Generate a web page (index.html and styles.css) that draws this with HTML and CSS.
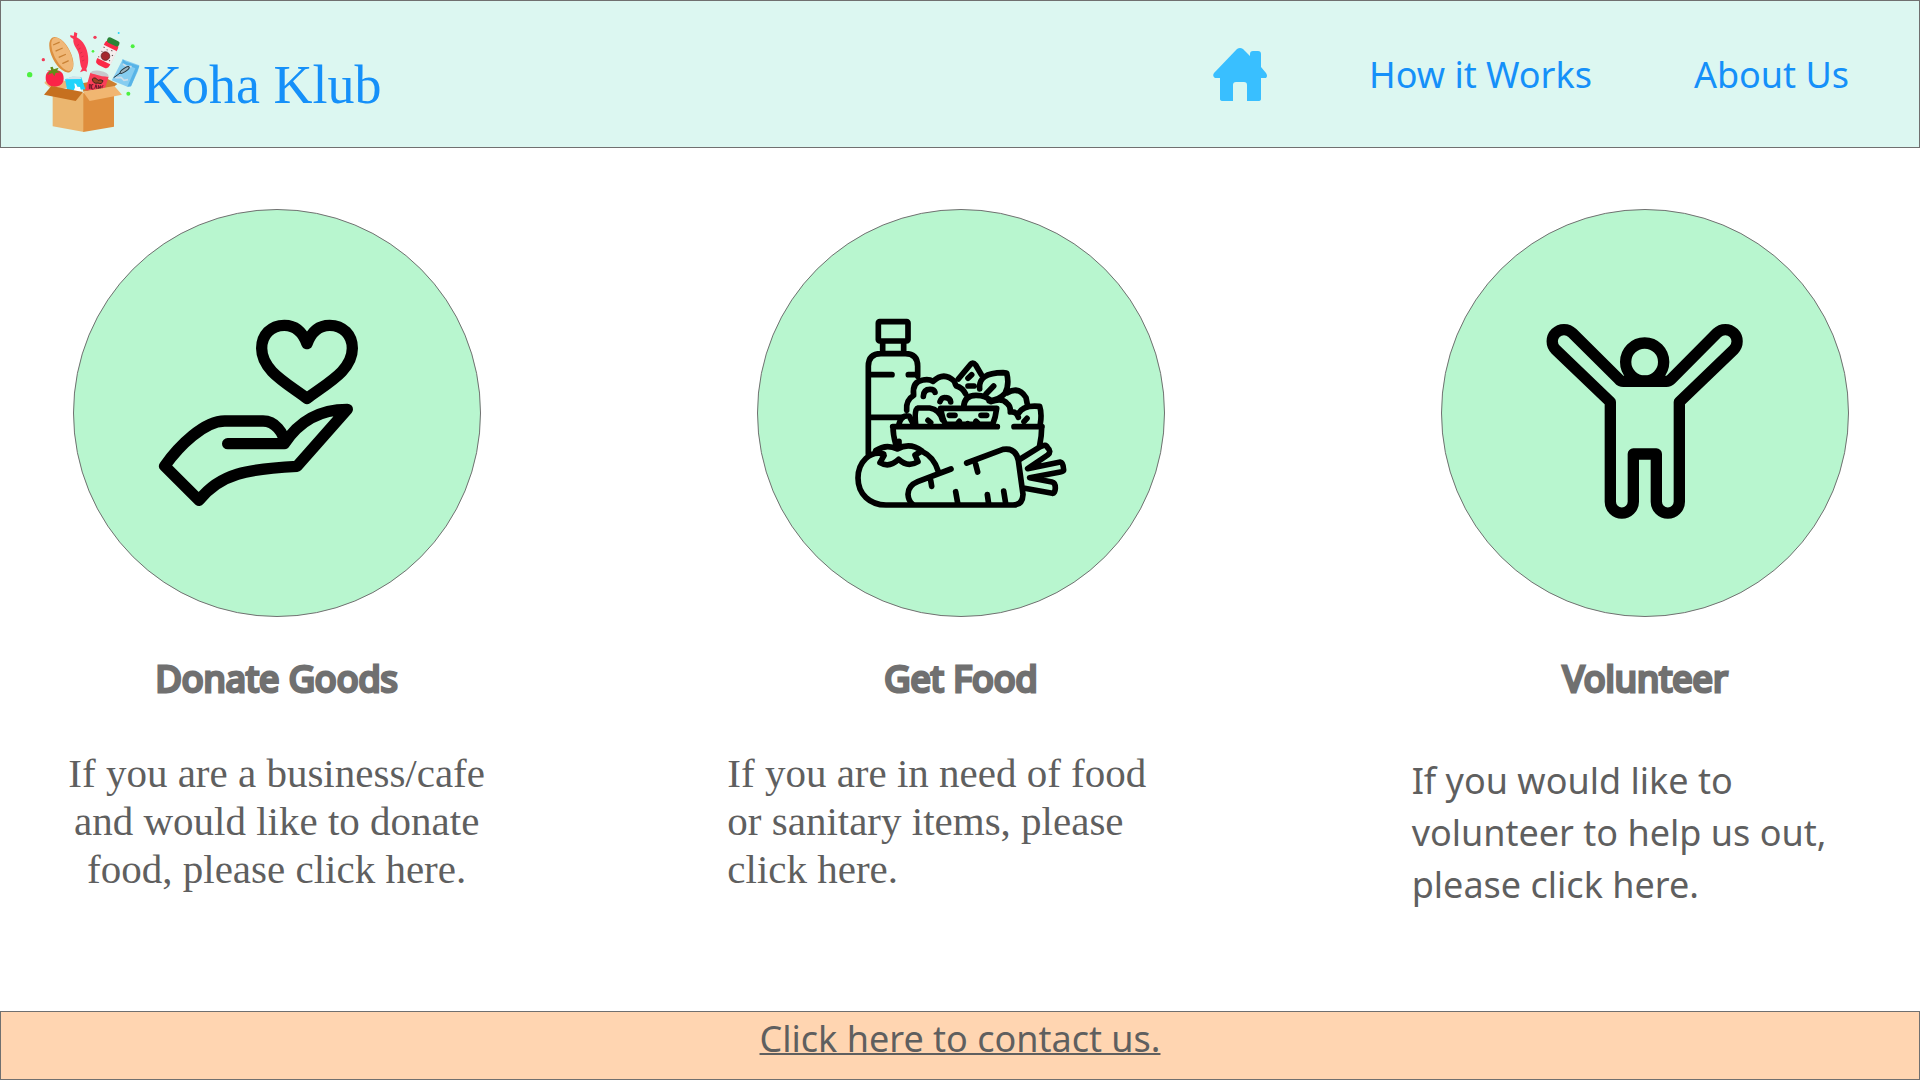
FILE: index.html
```html
<!DOCTYPE html>
<html lang="en">
<head>
<meta charset="utf-8">
<meta name="viewport" content="width=device-width, initial-scale=1">
<title>Koha Klub</title>
<link rel="stylesheet" href="styles.css">
</head>
<body>
<header class="site-header">
  <a class="brand" href="#">
    <svg class="brand-mark" viewBox="3 0 366 360" aria-hidden="true">
      <!-- confetti -->
      <g fill="#4cf03f"><circle cx="29" cy="164" r="8"/><circle cx="338" cy="79" r="6"/><circle cx="325" cy="221" r="6"/><circle cx="219" cy="94" r="4"/></g>
      <g fill="#f23b58"><circle cx="70" cy="119" r="5"/><circle cx="225" cy="52" r="5"/></g>
      <circle cx="296" cy="39" r="3" fill="#23d5fb"/>
      <!-- box interior -->
      <path d="M74 185L98 178L190 190L192 195L98 210L74 190Z" fill="#edb878"/>
      <path d="M186 190L262 176L292 192L282 200L190 215Z" fill="#cc7f30"/>
      <!-- bread -->
      <g transform="rotate(-27 124 104)"><ellipse cx="124" cy="104" rx="28" ry="58" fill="#dc9040"/><ellipse cx="127" cy="104" rx="24" ry="55" fill="#f0b878"/><path d="M117 67l18 1M115 87l20 1M115 108l20 1M116 129l18 1" stroke="#c98235" stroke-width="4" stroke-linecap="round"/></g>
      <!-- sausage -->
      <path d="M151 45L161 48L163 36L172 40L170 52C190 62 202 85 204 108C206 124 203 139 199 146L201 155L192 152L180 157L186 146C180 136 180 120 177 104C173 85 158 77 160 57L151 51Z" fill="#fb3655"/>
      <path d="M177 73l-6 4M182 84l-7 4M187 96l-7 4M191 108l-7 3M193 120l-7 3" stroke="#ca2944" stroke-width="2"/>
      <!-- jar -->
      <g transform="rotate(26 262 101)"><rect x="241" y="63" width="43" height="80" rx="12" fill="#fb2948"/><rect x="239" y="82" width="46" height="44" fill="#f4eeee"/><circle cx="260" cy="110" r="13" fill="#a5282e" stroke="#5c2023" stroke-width="2"/><path d="M243 88h4m8 3h3m10-4h4m4 12h4m-37 3h3m29 15h4m-38 4h4" stroke="#59494a" stroke-width="3"/><rect x="243" y="53" width="39" height="17" rx="7" fill="#2a8436"/></g>
      <!-- frozen bag -->
      <path d="M308 118L358 136L354 153L333 199L322 200L275 181L287 159Z" fill="#86cdf0"/>
      <path d="M308 118L318 125L358 138L333 199L322 200L346 145L307 130Z" fill="#58b4e7"/>
      <path d="M286 173l17-1 9 9 12-2M309 132l11 7 15 1" stroke="#cbdde9" stroke-width="5" fill="none"/>
      <path d="M281 173L302 158" stroke="#24343c" stroke-width="3"/><ellipse cx="314" cy="150" rx="16" ry="5" transform="rotate(-34 314 150)" fill="#9ab3be" stroke="#24343c" stroke-width="3"/>
      <!-- tomato -->
      <path d="M77 174C77 153 91 149 103 150C123 149 131 160 131 175C131 192 119 200 104 200C88 200 77 190 77 174Z" fill="#fb2448"/>
      <path d="M79 150l15 2-3-10 7-2 3 8 15-5-5 9 10 5-14 2-4 10-6-10-15 6 8-11z" fill="#638d18"/>
      <!-- milk carton and beans can -->
      <path d="M135 178L158 170L184 172L196 208L142 212Z" fill="#20d3fb"/><path d="M135 178L158 169L181 170L184 177Z" fill="#d3e4e8"/><path d="M163 190l5 2 4 8 8 1 4 14h-24l5-13z" fill="#fff"/>
      <path d="M211 158L266 170L253 210L196 211Z" fill="#fa3e58"/><path d="M211 159Q215 150 239 152Q266 157 266 169Q250 171 235 166Z" fill="#c8c8cd"/>
      <path d="M217 177q8-8 17 4q8-4 15 1q-3 13-15 7q-15 4-17-12z" fill="#9d4323" stroke="#40241c" stroke-width="3"/>
      <path d="M208 193v13m0-13q8 1 4 6q7 5-4 6m12-11h-5v13h6m3-1l4-12 3 13m4 0v-11l6 12v-12m9 1q-7 1-4 6q4 5-3 6" stroke="#681a2a" stroke-width="3" fill="none"/>
      <!-- box -->
      <path d="M98 205L192 220V336L98 319Z" fill="#ebb66f"/><path d="M190 220L282 204V320L190 336Z" fill="#df8e3d"/>
      <path d="M94 198L189 216L167 243L72 224Z" fill="#c6701f"/><path d="M189 215L283 198L306 224L209 243Z" fill="#f1b671"/>
    </svg>
    <span class="brand-name">Koha Klub</span>
  </a>
  <nav class="site-nav" aria-label="Main">
    <a href="#" aria-label="Home">
      <svg class="home-icon" viewBox="0 -1 54 54" aria-hidden="true"><path d="M24 1Q27-1 30 1L37 8V6Q37 3 40 3H45Q48 3 48 6V19L53 25Q55 28 53 30H48V51Q48 53 45 53H34V37Q34 34 31 34H23Q20 34 20 37V53H10Q7 53 7 51V30H2Q-1 28 1 25Z" fill="#39bfff"/></svg>
    </a>
    <a href="#how">How it Works</a>
    <a href="#about">About Us</a>
  </nav>
</header>
<main class="options">
  <section class="option">
    <a class="disc" href="#donate" aria-label="Donate Goods">
      <svg class="disc-icon thick" viewBox="51 -21 720 720" aria-hidden="true">
        <path d="M501 131C487 93 462 76 433 76C393 76 365 105 365 145C365 211 438 248 501 295C564 248 637 211 637 145C637 105 609 76 569 76C540 76 515 93 501 131Z"/>
        <path d="M263 431H433Q500 328 622 328L471 499C323 507 240 520 177 601L74 498C118 436 193 363 254 363H369C404 363 433 398 433 431"/>
      </svg>
    </a>
    <h2 class="option-title">Donate Goods</h2>
    <p class="option-text centered">If you are a business/cafe and would like to donate food, please click here.</p>
  </section>
  <section class="option">
    <a class="disc" href="#food" aria-label="Get Food">
      <svg class="disc-icon thin" viewBox="2 -36 720 720" aria-hidden="true">
        <!-- bottle -->
        <rect x="114" y="50" width="89" height="58" rx="4"/>
        <path d="M127 112V143M190 112V143M84 447V184Q84 146 122 146H195Q232 146 232 184V214M88 209H155M204 209H230M88 337H186"/>
        <!-- cauliflower -->
        <path d="M199 316Q196 285 220 271Q214 230 248 225Q266 221 278 229Q311 198 342 229Q345 240 348 243Q367 248 376 267M249 274Q250 253 269 253Q282 253 284 262M299 290Q304 275 317 278Q330 280 331 291M176 357Q184 328 207 334L217 353"/>
        <!-- cheese, leaves and small produce -->
        <path d="M354 222L389 180Q397 169 406 180L423 209M383 243H401M383 220L394 209M418 252Q413 203 488 203L499 204Q508 240 494 265Q477 284 446 288M437 267L460 243M370 307Q371 271 407 271Q440 271 452 290Q485 277 500 295Q511 302 510 321Q528 318 534 337M501 263Q536 243 557 278L562 303M535 325Q548 299 598 304Q605 325 600 356M551 350L560 340M226 357Q221 311 233 309H268Q297 313 306 344M263 346L271 353"/>
        <!-- wedge -->
        <path d="M301 310H469Q466 337 457 358H316Q307 346 301 310ZM327 331H344M422 331H439M352 355L357 349M382 358V356M407 349L413 355"/>
        <!-- bowl -->
        <path d="M157 365H471M521 365H605M158 367Q158 389 166 417M604 367Q604 393 598 421"/>
        <!-- tomato -->
        <path d="M130 447C90 435 53 471 53 519C53 568 89 600 137 600H518Q547 600 548 568L534 466Q526 427 488 433L379 474M243 438Q280 455 293 497M176 409V428M106 437Q137 415 171 432Q209 411 245 438L224 450L233 470Q202 489 175 463Q147 490 119 473L131 452Z"/>
        <!-- carrot -->
        <path d="M332 492L232 530Q203 542 203 568Q204 586 216 597M271 526L274 544M406 478L412 501M346 560L352 594M441 569L445 597M490 558L496 595M540 462L600 425Q617 416 621 427Q635 440 622 450L562 491L660 471Q669 472 670 495Q670 499 660 501L568 518L635 531Q645 533 645 549Q644 566 636 565L553 550"/>
      </svg>
    </a>
    <h2 class="option-title">Get Food</h2>
    <p class="option-text">If you are in need of food or sanitary items, please click here.</p>
  </section>
  <section class="option">
    <a class="disc" href="#volunteer" aria-label="Volunteer">
      <svg class="disc-icon thick" viewBox="-12 -36 720 720" aria-hidden="true">
        <circle cx="347" cy="171" r="57"/>
        <path d="M283 229H412Q420 229 427 222L564 84A35 35 0 0 1 614 134L451 291V590A34 34 0 0 1 382 590V447H313V590A34 34 0 0 1 244 590V291L80 134A35 35 0 0 1 130 84L269 222Q275 229 283 229Z"/>
      </svg>
    </a>
    <h2 class="option-title">Volunteer</h2>
    <p class="option-text sans">If you would like to volunteer to help us out, please click here.</p>
  </section>
</main>
<footer class="site-footer"><a href="#contact">Click here to contact us.</a></footer>
</body>
</html>
```
FILE: styles.css
```css
* {
  box-sizing: border-box;
}

body {
  display: flex;
  flex-direction: column;
  min-height: 100vh;
  margin: 0;
  background: #fff;
  color: #5f5f5f;
  font-family: "Noto Sans", "Open Sans", sans-serif;
  font-size: 36px;
}

a {
  color: inherit;
  text-decoration: none;
}

svg {
  display: block;
}

.site-header {
  display: flex;
  justify-content: space-between;
  align-items: center;
  min-height: 148px;
  padding: 0 70px 0 20px;
  border: 1px solid #707070;
  background: #dcf7f1;
  color: #1590f9;
}

.brand {
  display: flex;
  align-items: center;
  padding-top: 12px;
}

.brand-mark {
  width: 122px;
  height: 120px;
}

.brand-name {
  padding-top: 10px;
  font-family: "Liberation Serif", serif;
  font-size: 54px;
  line-height: 60px;
}

.site-nav {
  display: flex;
  align-items: center;
  gap: 102px;
}

.home-icon {
  width: 54px;
  height: 54px;
}

.options {
  display: grid;
  grid-template-columns: repeat(3, 1fr);
  gap: 217px;
  flex: 1;
  padding: 61px 41px 0 43px;
}

.option {
  display: flex;
  flex-direction: column;
  align-items: center;
}

.disc {
  display: flex;
  justify-content: center;
  align-items: center;
  width: 408px;
  height: 408px;
  border: 1px solid #707070;
  border-radius: 50%;
  background: #b8f6cf;
}

.disc-icon {
  width: 240px;
  height: 240px;
  fill: none;
  stroke: #000;
  stroke-linecap: round;
  stroke-linejoin: round;
}

.thick {
  stroke-width: 34px;
}

.thin {
  stroke-width: 17px;
}

.option-title {
  margin: 36px 0 0;
  color: #707070;
  font-size: 36px;
  font-weight: 400;
  line-height: 52px;
  -webkit-text-stroke: 3px #707070;
}

.option-text {
  align-self: flex-start;
  max-width: 440px;
  margin: 44px 0 0;
  font-family: "Liberation Serif", serif;
  font-size: 41px;
  line-height: 48px;
}

.centered {
  align-self: center;
  text-align: center;
}

.sans {
  margin-top: 50px;
  font-family: inherit;
  font-size: 36px;
  line-height: 52px;
}

.site-footer {
  min-height: 69px;
  border: 1px solid #707070;
  background: #ffd5b1;
  line-height: 54px;
  text-align: center;
}

.site-footer a {
  text-decoration: underline;
  text-decoration-thickness: 2px;
}
```
